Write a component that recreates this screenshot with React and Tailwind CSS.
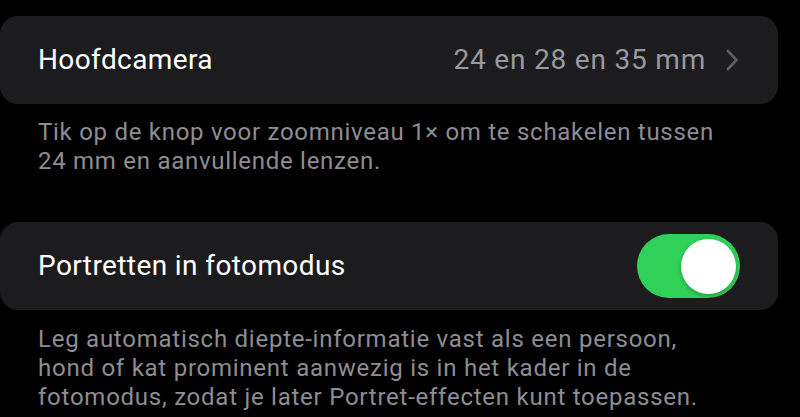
const Chevron = () => (
  <svg width="13" height="22" viewBox="0 0 13 22" className="ml-[20px] shrink-0">
    <path d="M2 2 L10.5 11 L2 20" fill="none" stroke="#5c5c61" strokeWidth="2.8" strokeLinecap="round" strokeLinejoin="round" />
  </svg>
);

const Toggle = () => (
  <div className="w-[103px] h-[64px] rounded-full bg-[#30d158] flex items-center justify-end px-[4px]">
    <div className="w-[55px] h-[55px] rounded-full bg-white shadow-[0_2px_5px_rgba(0,0,0,0.25)]" />
  </div>
);

export default function App() {
  return (
    <div
      className="w-[800px] h-[417px] bg-black overflow-hidden pt-[16px] pr-[22px]"
      style={{ fontFamily: "Roboto, 'Noto Sans', sans-serif" }}
    >
      <div className="h-[88px] bg-[#1c1c1e] rounded-[18px] flex items-center pl-[38px] pr-[39px]">
        <span className="text-[28px] tracking-[0.4px] text-white flex-1">Hoofdcamera</span>
        <span className="text-[28px] tracking-[0.8px] text-[#98989f]">24 en 28 en 35 mm</span>
        <Chevron />
      </div>
      <p className="pl-[38px] pt-[14px] text-[24px] tracking-[0.72px] leading-[29px] text-[#8d8d93]">
        Tik op de knop voor zoomniveau 1× om te schakelen tussen
        <br />
        24 mm en aanvullende lenzen.
      </p>
      <div className="mt-[46px] h-[88px] bg-[#1c1c1e] rounded-[18px] flex items-center pl-[38px] pr-[38px]">
        <span className="text-[28px] tracking-[0.4px] text-white flex-1">Portretten in fotomodus</span>
        <Toggle />
      </div>
      <p className="pl-[38px] pt-[15px] text-[24px] tracking-[0.75px] leading-[29px] text-[#8d8d93]">
        Leg automatisch diepte-informatie vast als een persoon,
        <br />
        hond of kat prominent aanwezig is in het kader in de
        <br />
        fotomodus, zodat je later Portret-effecten kunt toepassen.
      </p>
    </div>
  );
}
